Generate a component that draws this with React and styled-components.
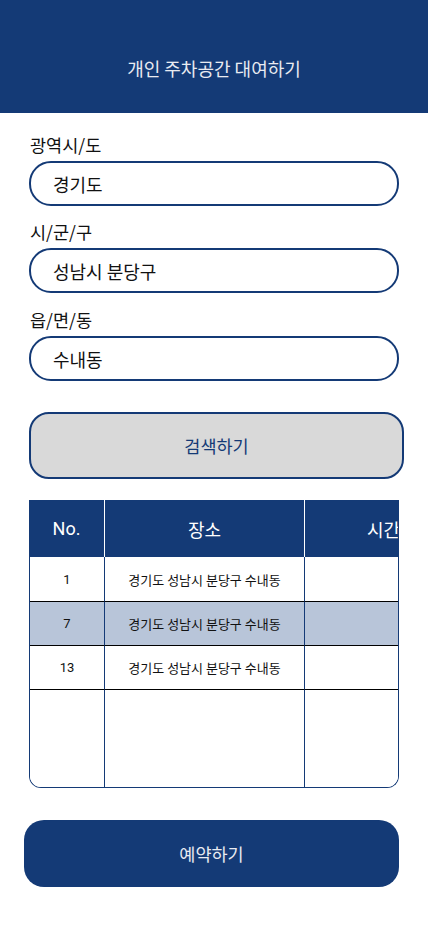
import React, { useState } from 'react';
import styled, { createGlobalStyle } from 'styled-components';

const GlobalStyle = createGlobalStyle`
  body {
    margin: 0;
    background: #fff;
    font-family: "Noto Sans CJK KR", "Noto Sans", sans-serif;
  }
`;

const NAVY = '#143a76';

const Page = styled.div`
  width: 428px;
  min-height: 926px;
  background: #fff;
`;

const Header = styled.header`
  height: 113px;
  background: ${NAVY};
  display: flex;
  align-items: center;
  justify-content: center;
  padding-top: 22px;
  box-sizing: border-box;
  color: #e9ebf1;
  font-size: 18px;
`;

const Form = styled.div`
  padding: 20px 29px 0 29px;
  display: flex;
  flex-direction: column;
`;

const Label = styled.div`
  font-size: 17.5px;
  color: #111;
  line-height: 24px;
  padding-left: 1px;
  margin-bottom: 4px;
`;

const Field = styled.div`
  height: 45px;
  box-sizing: border-box;
  border: 2px solid ${NAVY};
  border-radius: 22px;
  display: flex;
  align-items: center;
  padding-left: 22px;
  font-size: 18px;
  color: #111;
  margin-bottom: ${p => p.$gap}px;
`;

const SearchButton = styled.button`
  width: 375px;
  height: 67px;
  margin-top: 31px;
  border: 2px solid ${NAVY};
  border-radius: 20px;
  background: #d9d9d9;
  color: ${NAVY};
  font-family: inherit;
  font-size: 17.5px;
  cursor: pointer;
`;

const TableWrap = styled.div`
  margin: 21px 29px 0 29px;
  width: 370px;
  height: 288px;
  box-sizing: border-box;
  border: 1px solid ${NAVY};
  border-top: none;
  border-radius: 0 0 12px 12px;
  overflow: hidden;
`;

const Grid = styled.div`
  display: grid;
  grid-template-columns: 75px 200px 160px;
  grid-template-rows: 57px 44px 44px 44px 1fr;
  width: 435px;
  height: 100%;
  margin-left: -1px;
`;

const HeadCell = styled.div`
  background: ${NAVY};
  color: #fff;
  font-size: 18px;
  display: flex;
  align-items: center;
  justify-content: ${p => (p.$clip ? 'flex-start' : 'center')};
  padding-left: ${p => (p.$clip ? '62px' : '0')};
  border-left: ${p => (p.$first ? 'none' : '1px solid #fff')};
  font-family: ${p => (p.$latin ? 'Roboto, "Noto Sans CJK KR", sans-serif' : 'inherit')};
`;

const Cell = styled.div`
  background: ${p => (p.$selected ? '#b8c5d9' : '#fff')};
  border-top: ${p => (p.$top ? '1px solid #000' : 'none')};
  border-left: 1px solid ${NAVY};
  display: flex;
  align-items: center;
  justify-content: center;
  font-size: 13px;
  color: #111;
  font-family: ${p => (p.$latin ? 'Roboto, "Noto Sans CJK KR", sans-serif' : 'inherit')};
`;

const ReserveButton = styled.button`
  display: block;
  width: 375px;
  height: 67px;
  margin: 32px 0 0 24px;
  border: none;
  border-radius: 20px;
  background: ${NAVY};
  color: #e9ebf1;
  font-family: inherit;
  font-size: 17.5px;
  cursor: pointer;
`;

const rows = [
  { no: 1, place: '경기도 성남시 분당구 수내동' },
  { no: 7, place: '경기도 성남시 분당구 수내동' },
  { no: 13, place: '경기도 성남시 분당구 수내동' },
];

export default function App() {
  const [selected, setSelected] = useState(1);

  return (
    <Page>
      <GlobalStyle />
      <Header>개인 주차공간 대여하기</Header>
      <Form>
        <Label>광역시/도</Label>
        <Field $gap={14}>경기도</Field>
        <Label>시/군/구</Label>
        <Field $gap={15}>성남시 분당구</Field>
        <Label>읍/면/동</Label>
        <Field $gap={0}>수내동</Field>
        <SearchButton>검색하기</SearchButton>
      </Form>
      <TableWrap>
        <Grid>
          <HeadCell $first $latin>No.</HeadCell>
          <HeadCell>장소</HeadCell>
          <HeadCell $clip>시간</HeadCell>
          {rows.map((r, i) => (
            <React.Fragment key={r.no}>
              <Cell $top={i > 0} $latin $selected={selected === i} onClick={() => setSelected(i)}>{r.no}</Cell>
              <Cell $top={i > 0} $selected={selected === i} onClick={() => setSelected(i)}>{r.place}</Cell>
              <Cell $top={i > 0} $selected={selected === i} onClick={() => setSelected(i)} />
            </React.Fragment>
          ))}
          <Cell $top />
          <Cell $top />
          <Cell $top />
        </Grid>
      </TableWrap>
      <ReserveButton>예약하기</ReserveButton>
    </Page>
  );
}
